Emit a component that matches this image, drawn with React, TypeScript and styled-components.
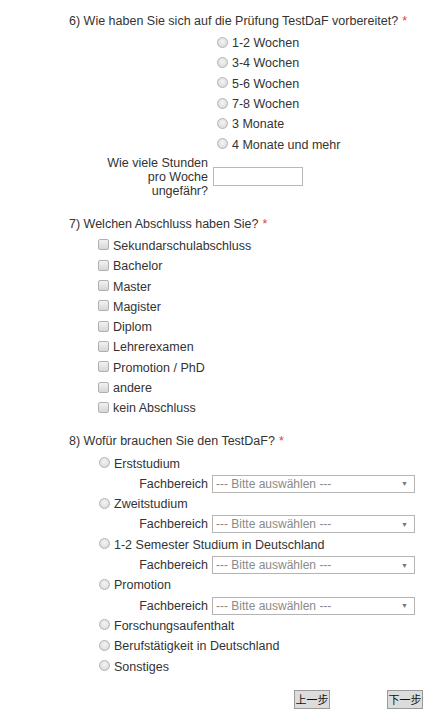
import styled, { createGlobalStyle } from 'styled-components';

const GlobalStyle = createGlobalStyle`
  body {
    margin: 0;
    background: #ffffff;
    font-family: "Liberation Sans", Arial, sans-serif;
    font-size: 12.5px;
    color: #333333;
  }
`;

const Page = styled.form`
  width: 431px;
  height: 712px;
  padding-top: 11px;
  box-sizing: border-box;
  display: flex;
  flex-direction: column;
`;

const Question = styled.section<{ $top?: number }>`
  display: flex;
  flex-direction: column;
  margin-top: ${(p) => p.$top ?? 0}px;
`;

const Title = styled.div`
  padding-left: 69px;
  height: 20px;
  line-height: 20px;
  margin-bottom: 2px;
`;

const Req = styled.span`
  color: #e0413b;
  margin-left: 4px;
`;

const Options = styled.div<{ $indent: number }>`
  display: flex;
  flex-direction: column;
  padding-left: ${(p) => p.$indent}px;
`;

const Option = styled.label`
  display: flex;
  align-items: center;
  gap: 4px;
  height: 20.3px;
`;

const Radio = styled.input.attrs({ type: 'radio' })`
  appearance: none;
  margin: 0;
  width: 11px;
  height: 11px;
  border-radius: 50%;
  border: 1px solid #b4b4b4;
  background: radial-gradient(circle at 50% 40%, #f4f4f4 0%, #dedede 70%, #cfcfcf 100%);
  box-sizing: border-box;
  flex-shrink: 0;
  position: relative;
  top: -1px;
`;

const Check = styled.input.attrs({ type: 'checkbox' })`
  appearance: none;
  margin: 0;
  width: 11px;
  height: 11px;
  border-radius: 2px;
  border: 1px solid #b0b0b0;
  background: linear-gradient(#f2f2f2, #d6d6d6);
  box-sizing: border-box;
  flex-shrink: 0;
  position: relative;
  top: -1px;
`;

const HoursRow = styled.div`
  display: flex;
  align-items: center;
  gap: 5px;
  padding-left: 104px;
  margin-top: 1px;
`;

const HoursLabel = styled.span`
  width: 104px;
  text-align: right;
  line-height: 14px;
`;

const TextField = styled.input.attrs({ type: 'text' })`
  width: 90px;
  height: 19px;
  box-sizing: border-box;
  border: 1px solid #b8b8b8;
  padding: 0 3px;
  margin: 0;
  font: inherit;
`;

const SubRow = styled.div`
  display: flex;
  align-items: center;
  justify-content: flex-end;
  gap: 4px;
  height: 20.3px;
  width: 316px;
`;

const Select = styled.div`
  width: 203px;
  height: 18px;
  box-sizing: border-box;
  border: 1px solid #b4b4b4;
  display: flex;
  align-items: center;
  justify-content: space-between;
  padding: 0 6px 0 3px;
  color: #8a8a8a;
  font-size: 12px;
`;

const Arrow = styled.span`
  font-size: 7px;
  color: #777777;
`;

const Buttons = styled.div`
  display: flex;
  justify-content: flex-end;
  gap: 57px;
  padding-right: 8px;
  margin-top: 13px;
`;

const StepButton = styled.button`
  width: 36px;
  height: 19px;
  padding: 0;
  border: 1px solid #9a9a9a;
  background: #dcdcdc;
  font-family: "Noto Sans CJK SC", sans-serif;
  font-size: 11px;
  color: #111111;
  line-height: 17px;
`;

const prep = ['1-2 Wochen', '3-4 Wochen', '5-6 Wochen', '7-8 Wochen', '3 Monate', '4 Monate und mehr'];
const degrees = [
  'Sekundarschulabschluss',
  'Bachelor',
  'Master',
  'Magister',
  'Diplom',
  'Lehrerexamen',
  'Promotion / PhD',
  'andere',
  'kein Abschluss',
];
const purposes = [
  { label: 'Erststudium', field: true },
  { label: 'Zweitstudium', field: true },
  { label: '1-2 Semester Studium in Deutschland', field: true },
  { label: 'Promotion', field: true },
  { label: 'Forschungsaufenthalt', field: false },
  { label: 'Berufstätigkeit in Deutschland', field: false },
  { label: 'Sonstiges', field: false },
];

export default function App() {
  return (
    <>
      <GlobalStyle />
      <Page>
        <Question>
          <Title>
            6) Wie haben Sie sich auf die Prüfung TestDaF vorbereitet?<Req>*</Req>
          </Title>
          <Options $indent={217}>
            {prep.map((p) => (
              <Option key={p}>
                <Radio name="q6" />
                {p}
              </Option>
            ))}
          </Options>
          <HoursRow>
            <HoursLabel>Wie viele Stunden pro Woche ungefähr?</HoursLabel>
            <TextField />
          </HoursRow>
        </Question>

        <Question $top={16}>
          <Title>
            7) Welchen Abschluss haben Sie?<Req>*</Req>
          </Title>
          <Options $indent={98}>
            {degrees.map((d) => (
              <Option key={d}>
                <Check />
                {d}
              </Option>
            ))}
          </Options>
        </Question>

        <Question $top={13}>
          <Title>
            8) Wofür brauchen Sie den TestDaF?<Req>*</Req>
          </Title>
          <Options $indent={99}>
            {purposes.map((p) => (
              <div key={p.label}>
                <Option>
                  <Radio name="q8" />
                  {p.label}
                </Option>
                {p.field && (
                  <SubRow>
                    Fachbereich
                    <Select>
                      --- Bitte auswählen ---
                      <Arrow>▼</Arrow>
                    </Select>
                  </SubRow>
                )}
              </div>
            ))}
          </Options>
        </Question>

        <Buttons>
          <StepButton type="button">上一步</StepButton>
          <StepButton type="button">下一步</StepButton>
        </Buttons>
      </Page>
    </>
  );
}
